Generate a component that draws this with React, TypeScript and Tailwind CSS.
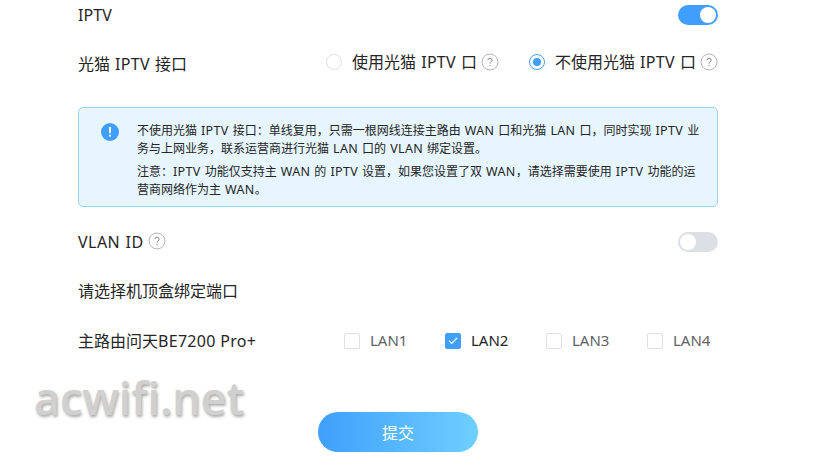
import { useState } from 'react';

const ports = ['LAN1', 'LAN2', 'LAN3', 'LAN4'];

const notes = [
  [
    '不使用光猫 IPTV 接口：单线复用，只需一根网线连接主路由 WAN 口和光猫 LAN 口，同时实现 IPTV 业',
    '务与上网业务，联系运营商进行光猫 LAN 口的 VLAN 绑定设置。',
  ],
  [
    '注意：IPTV 功能仅支持主 WAN 的 IPTV 设置，如果您设置了双 WAN，请选择需要使用 IPTV 功能的运',
    '营商网络作为主 WAN。',
  ],
];

// Latin words are set slightly wider than the Chinese text around them
function Mixed({ text, className }: { text: string; className: string }) {
  return text.split(/([ A-Z]+)/).map((part, i) =>
    i % 2 ? <span key={i} className={className}>{part}</span> : part
  );
}

function HelpIcon() {
  return (
    <svg width="18" height="18" viewBox="0 0 18 18" fill="none" className="shrink-0">
      <circle cx="9" cy="9" r="8" stroke="#b4b4b4" />
      <path d="M6.9 7.2a2.1 2 0 1 1 3.2 1.7c-.8.5-1.1.8-1.1 1.7" stroke="#808080" />
      <circle cx="9" cy="12.6" r=".7" fill="#808080" />
    </svg>
  );
}

function Switch({ on, onClick }: { on: boolean; onClick: () => void }) {
  return (
    <button
      role="switch"
      aria-checked={on}
      onClick={onClick}
      className={`flex h-5 w-10 items-center rounded-full px-0.5 ${on ? 'justify-end bg-[#409eff]' : 'justify-start bg-[#dcdfe6]'}`}
    >
      <span className="h-4 w-4 rounded-full bg-white" />
    </button>
  );
}

function Radio({ label, checked, onClick }: { label: string; checked: boolean; onClick: () => void }) {
  return (
    <div className="flex items-center">
      <button role="radio" aria-checked={checked} onClick={onClick} className="flex items-center gap-2.5">
        <span className={`flex h-4 w-4 items-center justify-center rounded-full border bg-white ${checked ? 'border-[#409eff]' : 'border-[#dcdfe6]'}`}>
          {checked && <span className="h-2 w-2 rounded-full bg-[#409eff]" />}
        </span>
        <span className="-mt-px whitespace-nowrap">
          <Mixed text={label} className="tracking-[0.3px] [word-spacing:0.6px]" />
        </span>
      </button>
      <span className="ml-1">
        <HelpIcon />
      </span>
    </div>
  );
}

export default function App() {
  const [iptv, setIptv] = useState(true);
  const [vlan, setVlan] = useState(false);
  const [direct, setDirect] = useState(true);
  const [selected, setSelected] = useState(['LAN2']);

  const toggle = (port: string) =>
    setSelected(selected.includes(port) ? selected.filter((p) => p !== port) : [...selected, port]);

  return (
    <div className="relative h-[473px] w-[823px] overflow-hidden bg-white pl-[78px] font-['Noto_Sans','Noto_Sans_CJK_SC',sans-serif] text-base leading-5 text-[#252525]">
      <div className="w-[640px]">
        <div className="flex h-[30px] items-center justify-between">
          <span className="tracking-[0.1px]">IPTV</span>
          <Switch on={iptv} onClick={() => setIptv(!iptv)} />
        </div>

        <div className="mt-[22px] flex h-5 items-center justify-between">
          <span className="pt-1">
            <Mixed text="光猫 IPTV 接口" className="tracking-[0.3px] [word-spacing:0.6px]" />
          </span>
          <div className="flex gap-[30px]">
            <Radio label="使用光猫 IPTV 口" checked={!direct} onClick={() => setDirect(false)} />
            <Radio label="不使用光猫 IPTV 口" checked={direct} onClick={() => setDirect(true)} />
          </div>
        </div>

        <div className="mt-[35px] flex h-[100px] rounded-[5px] border border-[#9bd3f2] bg-[#e6f5fe] pt-[14px] pl-[22px]">
          <svg width="18" height="18" viewBox="0 0 18 18" className="mt-px shrink-0">
            <circle cx="9" cy="9" r="9" fill="#409eff" />
            <path d="M7.9 4h2.2l-.3 6.2H8.2z" fill="#fff" />
            <circle cx="9" cy="12.7" r="1.1" fill="#fff" />
          </svg>
          <div className="ml-[18px] flex flex-col gap-[5px] text-xs leading-[18px] whitespace-nowrap">
            {notes.map((lines) => (
              <p key={lines[0]}>
                {lines.map((line) => (
                  <span key={line} className="block h-[18px]">
                    <Mixed text={line} className="text-[12.5px] tracking-[0.35px] [word-spacing:0.4px]" />
                  </span>
                ))}
              </p>
            ))}
          </div>
        </div>

        <div className="mt-[25px] flex h-5 items-center justify-between">
          <div className="flex items-center gap-1">
            <span className="tracking-[0.45px] [word-spacing:0.8px]">VLAN ID</span>
            <span className="-mt-0.5">
              <HelpIcon />
            </span>
          </div>
          <Switch on={vlan} onClick={() => setVlan(!vlan)} />
        </div>

        <div className="mt-[29px] h-5">请选择机顶盒绑定端口</div>

        <div className="mt-[30px] flex h-5 items-center">
          <span className="w-[266px] shrink-0">
            主路由问天<span className="tracking-[0.3px]">BE7200 Pro+</span>
          </span>
          {ports.map((port) => {
            const on = selected.includes(port);
            return (
              <button key={port} role="checkbox" aria-checked={on} onClick={() => toggle(port)} className="flex w-[101px] shrink-0 items-center gap-2.5 text-[15px]">
                <span className={`flex h-4 w-4 items-center justify-center rounded-xs border ${on ? 'border-[#409eff] bg-[#409eff]' : 'border-[#dcdfe6] bg-white'}`}>
                  {on && (
                    <svg width="10" height="8" viewBox="0 0 10 8" fill="none">
                      <path d="M1 3.6l2.7 2.7L9 1" stroke="#fff" strokeWidth="1.2" />
                    </svg>
                  )}
                </span>
                <span className={`-mt-0.5 ${on ? 'text-[#252525]' : 'text-[#606266]'}`}>{port}</span>
              </button>
            );
          })}
        </div>

        <button className="mt-[61px] ml-60 flex h-10 w-40 items-center justify-center rounded-full bg-linear-to-r from-[#3f9ffa] to-[#6fcfff] pt-0.5 text-white">
          提交
        </button>
      </div>

      <div className="absolute top-[372px] left-[34px] font-['Open_Sans',sans-serif] text-[45px] leading-[52px] font-semibold tracking-[-0.1px] text-[#d0d0d0] [text-shadow:1px_2px_3px_#a8a8a8]">
        acwifi.net
      </div>
    </div>
  );
}
